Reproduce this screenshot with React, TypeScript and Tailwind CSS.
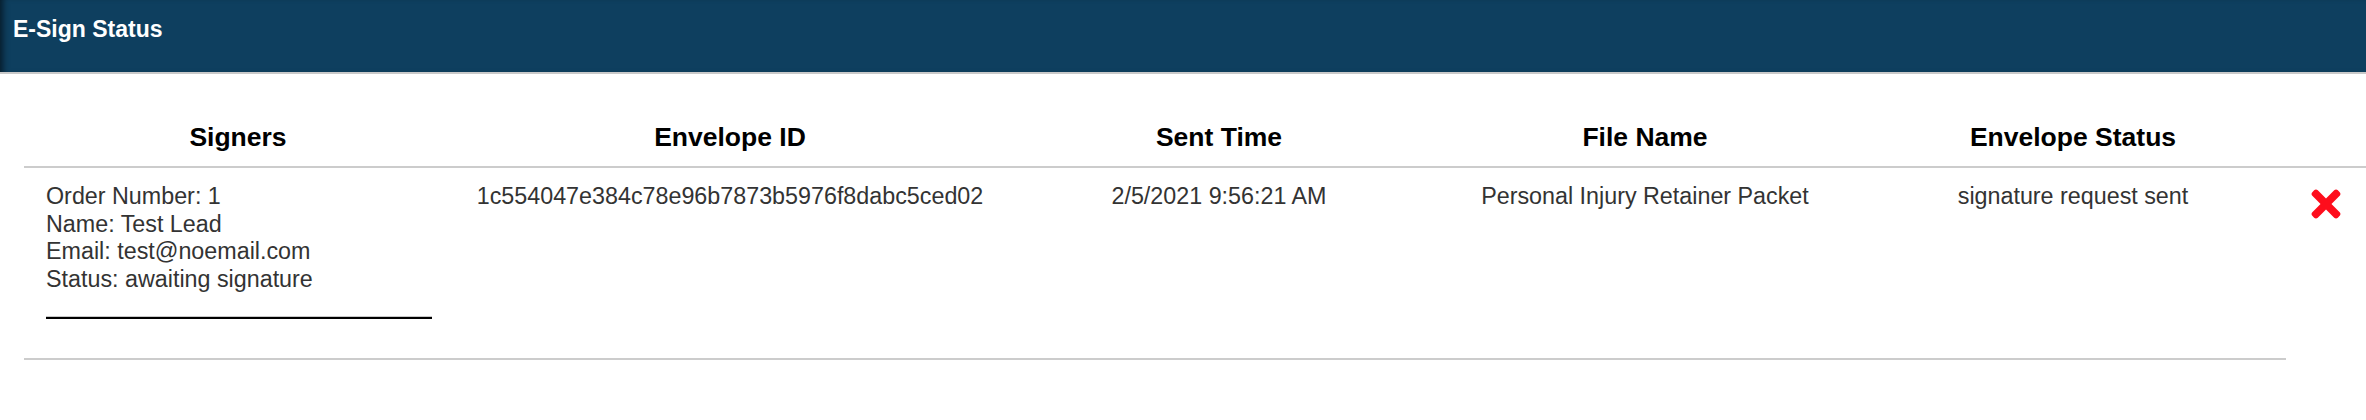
import React from "react";
import { FaTimes } from "react-icons/fa";

const headers = ["Signers", "Envelope ID", "Sent Time", "File Name", "Envelope Status"];

export default function App() {
  return (
    <div className="min-h-[420px] bg-white text-[#333]" style={{ fontFamily: '"Liberation Sans", Arial, sans-serif' }}>
      <div className="h-[74px] bg-[#0e3f5f] border-b-2 border-[#c9c9c9] pl-[13px] pt-[16px] shadow-[inset_7px_0_6px_-4px_rgba(0,0,0,0.55)]">
        <h1 className="text-[23px] leading-[27px] font-bold text-white">E-Sign Status</h1>
      </div>
      <div className="ml-[24px] mt-[48px]">
        <div className="grid grid-cols-[428px_556px_422px_430px_426px_80px] border-b-2 border-[#cccccc]">
          {headers.map((h) => (
            <div key={h} className="text-center text-[26.5px] leading-[30px] font-bold text-black pb-[14px]">
              {h}
            </div>
          ))}
          <div />
        </div>
        <div className="grid grid-cols-[428px_556px_422px_430px_426px_80px] text-[23.3px] leading-[27.5px]">
          <div className="col-span-5 grid grid-cols-[428px_556px_422px_430px_426px] border-b-2 border-[#cccccc] pt-[15px] pb-[39px]">
            <div className="pl-[22px]">
              <div>Order Number: 1</div>
              <div>Name: Test Lead</div>
              <div>Email: test@noemail.com</div>
              <div>Status: awaiting signature</div>
              <div className="mt-[23px] w-[386px] border-t border-[#c8c8c8] h-[3px] bg-black" />
            </div>
            <div className="text-center">1c554047e384c78e96b7873b5976f8dabc5ced02</div>
            <div className="text-center">2/5/2021 9:56:21 AM</div>
            <div className="text-center">Personal Injury Retainer Packet</div>
            <div className="text-center">signature request sent</div>
          </div>
          <div className="flex justify-center pt-[15px]">
            <FaTimes size={42} color="#fe0d1c" />
          </div>
        </div>
      </div>
    </div>
  );
}
